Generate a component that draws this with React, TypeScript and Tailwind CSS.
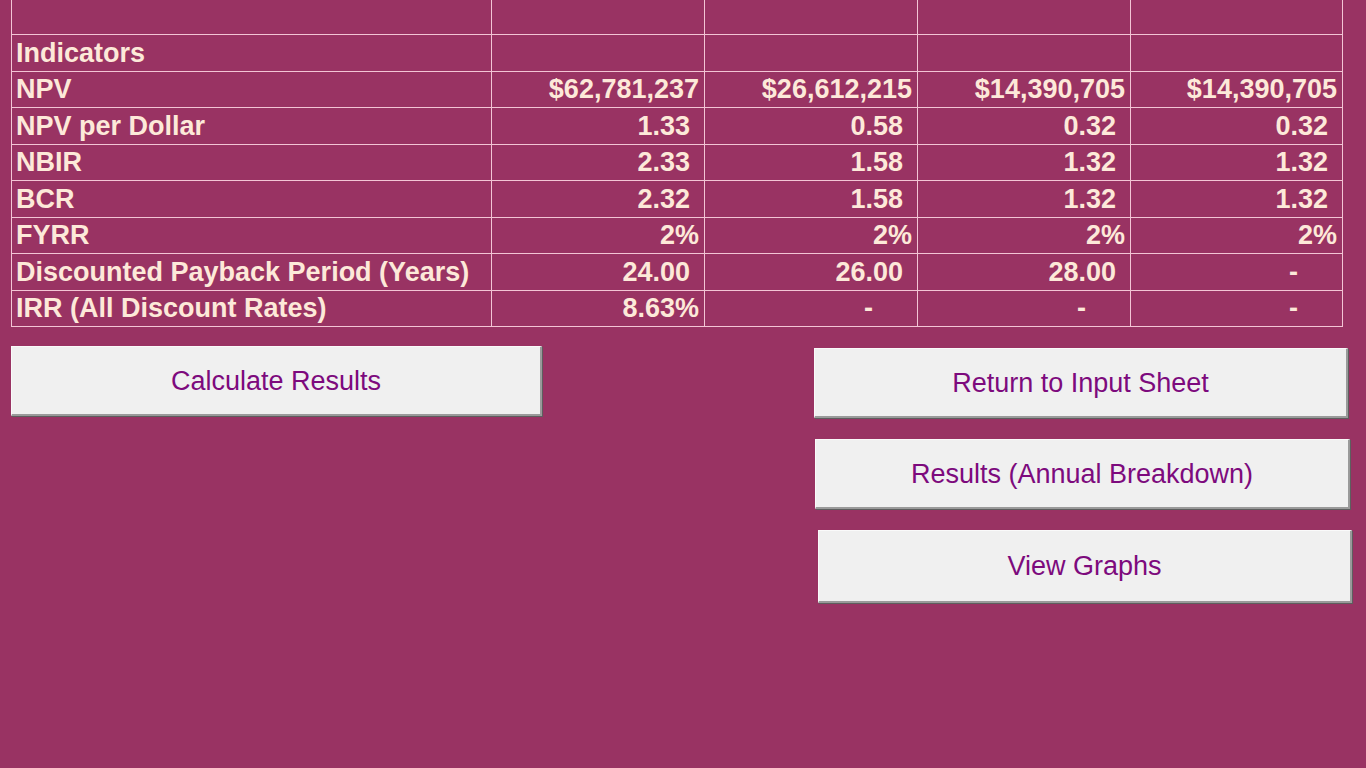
const rows: { label: string; values: { text: string; pad: string }[] }[] = [
  {
    label: "NPV",
    values: [
      { text: "$62,781,237", pad: "pr-[5px]" },
      { text: "$26,612,215", pad: "pr-[5px]" },
      { text: "$14,390,705", pad: "pr-[5px]" },
      { text: "$14,390,705", pad: "pr-[5px]" },
    ],
  },
  {
    label: "NPV per Dollar",
    values: [
      { text: "1.33", pad: "pr-[14px]" },
      { text: "0.58", pad: "pr-[14px]" },
      { text: "0.32", pad: "pr-[14px]" },
      { text: "0.32", pad: "pr-[14px]" },
    ],
  },
  {
    label: "NBIR",
    values: [
      { text: "2.33", pad: "pr-[14px]" },
      { text: "1.58", pad: "pr-[14px]" },
      { text: "1.32", pad: "pr-[14px]" },
      { text: "1.32", pad: "pr-[14px]" },
    ],
  },
  {
    label: "BCR",
    values: [
      { text: "2.32", pad: "pr-[14px]" },
      { text: "1.58", pad: "pr-[14px]" },
      { text: "1.32", pad: "pr-[14px]" },
      { text: "1.32", pad: "pr-[14px]" },
    ],
  },
  {
    label: "FYRR",
    values: [
      { text: "2%", pad: "pr-[5px]" },
      { text: "2%", pad: "pr-[5px]" },
      { text: "2%", pad: "pr-[5px]" },
      { text: "2%", pad: "pr-[5px]" },
    ],
  },
  {
    label: "Discounted Payback Period (Years)",
    values: [
      { text: "24.00", pad: "pr-[14px]" },
      { text: "26.00", pad: "pr-[14px]" },
      { text: "28.00", pad: "pr-[14px]" },
      { text: "-", pad: "pr-[44px]" },
    ],
  },
  {
    label: "IRR (All Discount Rates)",
    values: [
      { text: "8.63%", pad: "pr-[5px]" },
      { text: "-", pad: "pr-[44px]" },
      { text: "-", pad: "pr-[44px]" },
      { text: "-", pad: "pr-[44px]" },
    ],
  },
];

const SheetButton = ({ label, className }: { label: string; className?: string }) => (
  <button
    className={
      "flex items-center justify-center bg-[#f0f0f0] border-t border-l border-[#fafafa] border-r-2 border-b-2 border-r-[#9a9a9a] border-b-[#9a9a9a] shadow-[1px_1px_0_#5e5e5e] text-[27px] text-[#7d0a7d] " +
      (className ?? "")
    }
  >
    {label}
  </button>
);

export default function App() {
  return (
    <div
      className="w-[1366px] h-[768px] overflow-hidden bg-[#993363] text-[#fde9d9]"
      style={{ fontFamily: '"Liberation Sans", Arial, sans-serif' }}
    >
      <div className="ml-[11px] w-[1332px] bg-[#f3c5d5] px-px pb-px">
        <div className="grid grid-cols-[479px_212px_212px_212px_211px] grid-rows-[34px_36px_35px_36px_35px_36px_35px_36px_35px] gap-px font-bold text-[27px]">
          {[0, 1, 2, 3, 4].map((i) => (
            <div key={"top" + i} className="bg-[#993363]" />
          ))}
          <div className="bg-[#993363] flex items-center pl-[4px] leading-none">Indicators</div>
          {[0, 1, 2, 3].map((i) => (
            <div key={"ind" + i} className="bg-[#993363]" />
          ))}
          {rows.map((row) => (
            <>
              <div key={row.label} className="bg-[#993363] flex items-center pl-[4px] leading-none whitespace-nowrap">
                {row.label}
              </div>
              {row.values.map((v, j) => (
                <div
                  key={row.label + j}
                  className={"bg-[#993363] flex items-center justify-end leading-none whitespace-nowrap " + v.pad}
                >
                  {v.text}
                </div>
              ))}
            </>
          ))}
        </div>
      </div>

      <div className="flex mt-[19px]">
        <div className="ml-[11px]">
          <SheetButton label="Calculate Results" className="w-[531px] h-[70px] pt-[1px]" />
        </div>
        <div className="ml-[272px] mt-[2px] flex flex-col gap-[21px]">
          <SheetButton label="Return to Input Sheet" className="w-[534px] h-[70px] pt-[1px]" />
          <SheetButton label="Results (Annual Breakdown)" className="ml-px w-[535px] h-[70px] pt-[1px]" />
          <SheetButton label="View Graphs" className="ml-[4px] w-[534px] h-[73px] pt-[1px]" />
        </div>
      </div>
    </div>
  );
}
